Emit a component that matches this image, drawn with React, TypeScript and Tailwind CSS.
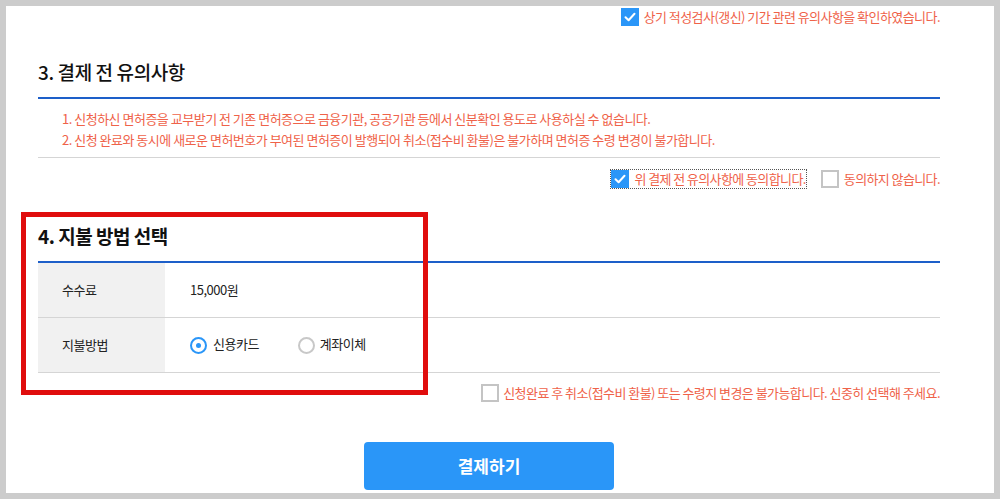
const font = { fontFamily: '"Noto Sans CJK KR", "Noto Sans", sans-serif' };

const CheckOn = () => (
  <span className="flex h-[18px] w-[18px] shrink-0 items-center justify-center bg-[#2a96f8]">
    <svg width="12" height="10" viewBox="0 0 12 10" fill="none">
      <path d="M1.5 5.2 L4.6 8.2 L10.5 1.8" stroke="white" strokeWidth="2" strokeLinecap="round" strokeLinejoin="round" />
    </svg>
  </span>
);

const CheckOff = () => (
  <span className="block h-[18px] w-[18px] shrink-0 border-2 border-[#c4c4c4] bg-white" />
);

const Radio = ({ on }: { on?: boolean }) =>
  on ? (
    <span className="flex h-[17px] w-[17px] shrink-0 items-center justify-center rounded-full border-2 border-[#2a96f8] bg-white">
      <span className="block h-[5px] w-[5px] rounded-full bg-[#2a96f8]" />
    </span>
  ) : (
    <span className="block h-[17px] w-[17px] shrink-0 rounded-full border-2 border-[#c8c8c8] bg-white" />
  );

export default function App() {
  return (
    <div className="relative h-[499px] w-[1000px] overflow-hidden bg-[#cccccc] p-[6px]" style={font}>
      <div className="h-full bg-white pl-[32px] pr-[54px] pt-[2px]">
        {/* 상단 확인 */}
        <div className="flex items-center justify-end gap-[5px] text-[13px] leading-[18px] tracking-[-0.55px] text-[#ef6249]">
          <CheckOn />
          <span>상기 적성검사(갱신) 기간 관련 유의사항을 확인하였습니다.</span>
        </div>

        {/* 3. 결제 전 유의사항 */}
        <h2 className="mt-[32px] text-[19px] font-medium leading-[28px] tracking-[-0.4px] text-[#111]">3. 결제 전 유의사항</h2>
        <div className="mt-[11px] h-[2px] bg-[#1d5fc9]" />
        <ul className="border-b border-[#d5d5d5] pb-[7px] pl-[24px] pt-[9px] text-[13px] leading-[21px] tracking-[-0.5px] text-[#ef6249]">
          <li>1. 신청하신 면허증을 교부받기 전 기존 면허증으로 금융기관, 공공기관 등에서 신분확인 용도로 사용하실 수 없습니다.</li>
          <li>2. 신청 완료와 동시에 새로운 면허번호가 부여된 면허증이 발행되어 취소(접수비 환불)은 불가하며 면허증 수령 변경이 불가합니다.</li>
        </ul>
        <div className="mt-[12px] flex items-center justify-end text-[13px] leading-[18px] tracking-[-0.6px] text-[#ef6249]">
          <label className="flex items-center gap-[5px] outline outline-1 outline-dotted outline-[#555]">
            <CheckOn />
            <span>위 결제 전 유의사항에 동의합니다.</span>
          </label>
          <label className="ml-[15px] flex items-center gap-[5px]">
            <CheckOff />
            <span>동의하지 않습니다.</span>
          </label>
        </div>

        {/* 4. 지불 방법 선택 */}
        <h2 className="mt-[34px] text-[19px] font-bold leading-[28px] tracking-[-0.5px] text-[#111]">4. 지불 방법 선택</h2>
        <div className="mt-[11px] h-[2px] bg-[#1d5fc9]" />
        <div className="text-[13px] tracking-[-0.5px] text-[#222]">
          <div className="flex h-[55px] border-b border-[#d5d5d5]">
            <div className="flex w-[127px] items-center bg-[#f1f1f1] pl-[24px]">수수료</div>
            <div className="flex items-center pl-[25px]">15,000원</div>
          </div>
          <div className="flex h-[55px] border-b border-[#d5d5d5]">
            <div className="flex w-[127px] items-center bg-[#f1f1f1] pl-[24px]">지불방법</div>
            <div className="flex items-center pl-[25px]">
              <label className="flex items-center gap-[6px]">
                <Radio on />
                <span className="-mt-[2px]">신용카드</span>
              </label>
              <label className="ml-[39px] flex items-center gap-[5px]">
                <Radio />
                <span className="-mt-[2px]">계좌이체</span>
              </label>
            </div>
          </div>
        </div>

        <div className="mt-[11px] flex items-center justify-end gap-[4px] text-[13px] leading-[18px] tracking-[-0.55px] text-[#ef6249]">
          <CheckOff />
          <span>신청완료 후 취소(접수비 환불) 또는 수령지 변경은 불가능합니다. 신중히 선택해 주세요.</span>
        </div>

        <div className="mt-[40px] flex justify-center">
          <button className="h-[48px] w-[250px] rounded-[4px] bg-[#2a96f8] text-[17px] font-bold text-white">결제하기</button>
        </div>
      </div>

      {/* 강조 표시 */}
      <div className="pointer-events-none absolute left-[21px] top-[212px] h-[183px] w-[407px] border-[5px] border-[#e00d0d]" />
    </div>
  );
}
